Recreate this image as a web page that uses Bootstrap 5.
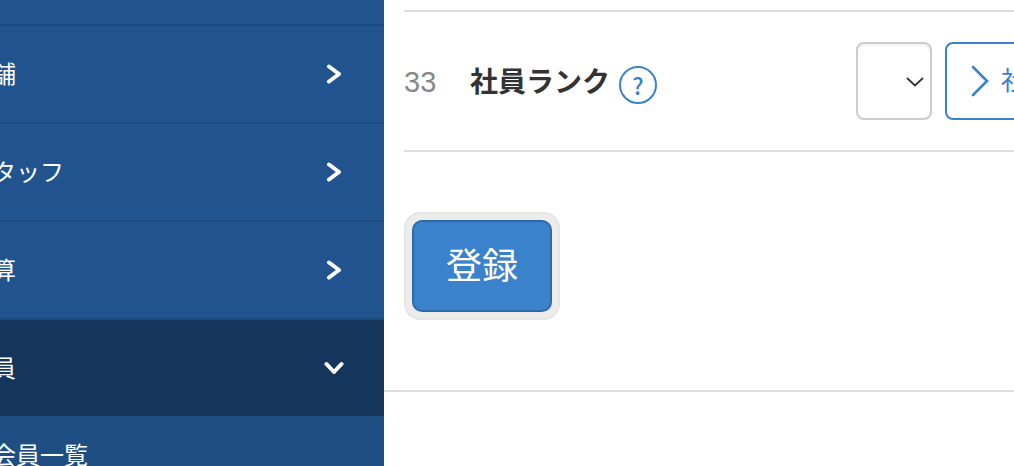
<!DOCTYPE html>
<html lang="ja">
<head>
<meta charset="utf-8">
<title>社員ランク</title>
<link href="https://cdn.jsdelivr.net/npm/bootstrap@5.3.0/dist/css/bootstrap.min.css" rel="stylesheet">
<style>
html,body{height:466px;overflow:hidden;background:#fff}
body{font-family:"Liberation Sans","Noto Sans CJK JP",sans-serif;color:#333}
.shell{width:1014px;height:466px}
.side{width:384px;background:#21538f;color:#fff;overflow:hidden;font-size:24px;flex:none}
.side-stub{height:26px;border-bottom:2px solid #1e4b80}
.side-row{height:98px;border-bottom:2px solid #1e4b80;padding-right:42px}
.side-row.on{height:96px;background:#14365c;border-bottom:0;padding-right:40px}
.side-label{margin-left:-32px;padding-top:2px}
.side-sub{height:60px;background:#1f4e83;padding-top:23px;line-height:34px}
.side-sub span{margin-left:-8px;display:block}
.main-area{flex:1;min-width:0;overflow:hidden;position:relative}
.form-list{margin:10px 0 0 20px;width:700px}
.field-row{height:142px;border-top:2px solid #ddd;border-bottom:2px solid #ddd}
.field-num{width:66px;font-size:29px;color:#888;flex:none;padding-top:3px}
.field-name{width:386px;flex:none;font-size:28px;font-weight:700;color:#333}
.field-text{padding-top:3px}
.help-dot{width:38px;height:38px;border:2px solid #3a82cc;border-radius:50%;color:#3a82cc;font-family:"Noto Sans CJK JP",sans-serif;font-size:23px;font-weight:500;margin:8px 0 0 9px;line-height:1}
.rank-select{width:76px;height:78px;border:2px solid #ccc;border-radius:8px;background:#fff;flex:none;padding-right:6px;padding-top:2px;box-shadow:inset 0 2px 2px #f2f2f2}
.pick-btn{width:260px;height:78px;border:2px solid #3a82cc;border-radius:8px;margin-left:13px;color:#3a82cc;background:#fff;font-size:26px;flex:none;padding-left:24px;gap:12px}
.halo{margin:60px 0 0 20px;padding:6px;background:#ececec;border:2px solid #e6e6e6;border-radius:16px;width:156px;height:108px}
.save-btn{width:140px;height:92px;background:#3a82cc;border:2px solid #3069a8;border-radius:10px;color:#fff;font-size:36px;padding:2px 0 0;line-height:1}
.save-btn:hover{background:#3a82cc;border-color:#3069a8;color:#fff}
.foot-line{border-top:2px solid #ddd;margin-top:70px}
</style>
</head>
<body>
<div class="shell d-flex">
  <aside class="side">
    <div class="side-stub"></div>
    <div class="side-row d-flex align-items-center justify-content-between">
      <span class="side-label">店舗</span>
      <svg width="16" height="20" viewBox="0 0 16 20" fill="none" stroke="#fff" stroke-width="4" stroke-linecap="round" stroke-linejoin="round"><path d="M3 2.5l10 7.5-10 7.5"/></svg>
    </div>
    <div class="side-row d-flex align-items-center justify-content-between">
      <span class="side-label">スタッフ</span>
      <svg width="16" height="20" viewBox="0 0 16 20" fill="none" stroke="#fff" stroke-width="4" stroke-linecap="round" stroke-linejoin="round"><path d="M3 2.5l10 7.5-10 7.5"/></svg>
    </div>
    <div class="side-row d-flex align-items-center justify-content-between">
      <span class="side-label">精算</span>
      <svg width="16" height="20" viewBox="0 0 16 20" fill="none" stroke="#fff" stroke-width="4" stroke-linecap="round" stroke-linejoin="round"><path d="M3 2.5l10 7.5-10 7.5"/></svg>
    </div>
    <div class="side-row on d-flex align-items-center justify-content-between">
      <span class="side-label">会員</span>
      <svg width="20" height="14" viewBox="0 0 20 14" fill="none" stroke="#fff" stroke-width="4" stroke-linecap="round" stroke-linejoin="round"><path d="M2.5 3l7.5 8 7.5-8"/></svg>
    </div>
    <div class="side-sub"><span>会員一覧</span></div>
  </aside>
  <main class="main-area">
    <div class="form-list">
      <div class="field-row d-flex align-items-center">
        <div class="field-num">33</div>
        <div class="field-name d-flex align-items-center"><span class="field-text">社員ランク</span><span class="help-dot d-flex align-items-center justify-content-center">?</span></div>
        <div class="rank-select d-flex align-items-center justify-content-end">
          <svg width="18" height="10" viewBox="0 0 18 10" fill="none" stroke="#333" stroke-width="1.8"><path d="M1 1l8 7.5L17 1"/></svg>
        </div>
        <div class="pick-btn d-flex align-items-center">
          <svg width="18" height="32" viewBox="0 0 18 32" fill="none" stroke="#3a82cc" stroke-width="2.6" stroke-linecap="round"><path d="M2 2l14 14L2 30"/></svg>
          <span>社員</span>
        </div>
      </div>
    </div>
    <div class="halo"><button type="button" class="btn save-btn">登録</button></div>
    <div class="foot-line"></div>
  </main>
</div>
<script src="https://cdn.jsdelivr.net/npm/bootstrap@5.3.0/dist/js/bootstrap.bundle.min.js"></script>
</body>
</html>
